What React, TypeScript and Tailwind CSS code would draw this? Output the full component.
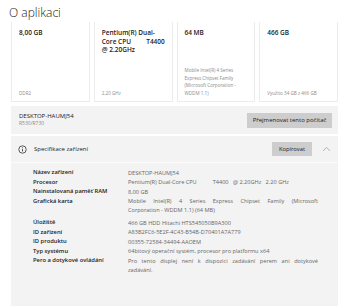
import React from 'react';

// Hardware summary tiles
const TILES = [
  { value: '8,00 GB', note: 'DDR2' },
  { value: 'Pentium(R) Dual-\nCore CPU         T4400\n@ 2.20GHz', note: '2,20 GHz' },
  { value: '64 MB', note: 'Mobile Intel(R) 4 Series\nExpress Chipset Family\n(Microsoft Corporation -\nWDDM 1.1)' },
  { value: '466 GB', note: 'Využito 34 GB z 466 GB' },
];

// Multi-line values are split so the first line can be justified like the original
const SPECS: { label: string; lines: string[]; gap?: boolean }[] = [
  { label: 'Název zařízení', lines: ['DESKTOP-HAUMJ54'] },
  { label: 'Procesor', lines: ['Pentium(R) Dual-Core CPU           T4400   @ 2.20GHz   2.20 GHz'] },
  { label: 'Nainstalovaná paměť RAM', lines: ['8,00 GB'] },
  {
    label: 'Grafická karta',
    lines: ['Mobile Intel(R) 4 Series Express Chipset Family (Microsoft', 'Corporation - WDDM 1.1) (64 MB)'],
  },
  { label: 'Úložiště', lines: ['466 GB HDD Hitachi HTS545050B9A300'], gap: true },
  { label: 'ID zařízení', lines: ['A83B2FC6-5E2F-4C43-B54B-D70401A7A779'] },
  { label: 'ID produktu', lines: ['00355-72584-34494-AAOEM'] },
  { label: 'Typ systému', lines: ['64bitový operační systém, procesor pro platformu x64'] },
  {
    label: 'Pero a dotykové ovládání',
    lines: ['Pro tento displej není k dispozici zadávání perem ani dotykové', 'zadávání.'],
  },
];

function InfoIcon() {
  return (
    <svg width="9" height="9" viewBox="0 0 9 9" className="shrink-0">
      <circle cx="4.5" cy="4.5" r="3.7" fill="none" stroke="#333" strokeWidth="0.8" />
      <line x1="4.5" y1="4" x2="4.5" y2="6.5" stroke="#333" strokeWidth="0.8" />
      <circle cx="4.5" cy="2.8" r="0.5" fill="#333" />
    </svg>
  );
}

function ChevronUp() {
  return (
    <svg width="9" height="6" viewBox="0 0 9 6">
      <polyline points="1,4.8 4.5,1.5 8,4.8" fill="none" stroke="#a0a0a0" strokeWidth="0.8" />
    </svg>
  );
}

function Tile({ value, note }: { value: string; note: string }) {
  return (
    <div className="flex flex-col justify-between border-x border-b border-[#ececec] pl-[7px] pr-[3px] pt-[7px] pb-[4px]">
      <div className="whitespace-pre text-[6.5px] leading-[8.6px] font-semibold text-[#1a1a1a]">{value}</div>
      <div className="whitespace-pre-line text-[4.6px] leading-[7.5px] text-[#8a8a8a]">{note}</div>
    </div>
  );
}

export default function App() {
  return (
    <div
      className="w-[340px] h-[306px] overflow-hidden bg-white text-[#1a1a1a]"
      style={{ fontFamily: '"Open Sans", "Noto Sans", sans-serif' }}
    >
      {/* Title */}
      <div className="h-[22px] pl-[9px] pt-[6px] text-[12px] leading-[14px] font-light text-[#202020]">
        O aplikaci
      </div>

      <div className="pl-[11px] pr-[2px] flex flex-col">
        {/* Tiles */}
        <div className="grid grid-cols-4 gap-[4px] h-[80px]">
          {TILES.map((t) => (
            <Tile key={t.value} value={t.value} note={t.note} />
          ))}
        </div>

        {/* Device name */}
        <div className="mt-[4px] h-[28px] bg-[#f3f3f3] flex items-center justify-between pl-[8px] pr-[6px]">
          <div className="flex flex-col">
            <div className="text-[6px] leading-[7px] text-[#1a1a1a]">DESKTOP-HAUMJ54</div>
            <div className="text-[5px] leading-[6.5px] text-[#8a8a8a]">R530/R730</div>
          </div>
          <div className="h-[15px] w-[85px] bg-[#cdcdcd] flex items-center justify-center text-[6px] text-[#1a1a1a]">
            Přejmenovat tento počítač
          </div>
        </div>

        {/* Specs */}
        <div className="mt-[2px] bg-[#f3f3f3] h-[200px]">
          <div className="h-[26px] flex items-center pl-[7px] pr-[6px]">
            <InfoIcon />
            <div className="ml-[7px] text-[6px] text-[#1a1a1a]">Specifikace zařízení</div>
            <div className="ml-auto h-[14px] w-[40px] bg-[#cdcdcd] flex items-center justify-center text-[5.8px] text-[#1a1a1a]">
              Kopírovat
            </div>
            <div className="ml-[10px] mr-[1px] flex items-center">
              <ChevronUp />
            </div>
          </div>
          <div className="border-t border-[#fbfbfb] pt-[5px] pl-[22px] pr-[20px] flex flex-col">
            {SPECS.map((s) => (
              <div key={s.label} className={`flex ${s.gap ? 'mt-[3px]' : ''}`}>
                <div className="w-[95px] shrink-0 text-[5.8px] leading-[9.5px] font-semibold text-[#1a1a1a]">
                  {s.label}
                </div>
                <div className="flex-1 min-w-0 text-[5.6px] leading-[9px] pt-[0.5px] text-[#666]">
                  {s.lines.map((line, i) => (
                    <div
                      key={i}
                      className={`whitespace-pre ${
                        s.lines.length > 1 && i < s.lines.length - 1 ? 'text-justify [text-align-last:justify]' : ''
                      }`}
                    >
                      {line}
                    </div>
                  ))}
                </div>
              </div>
            ))}
          </div>
        </div>
      </div>
    </div>
  );
}
